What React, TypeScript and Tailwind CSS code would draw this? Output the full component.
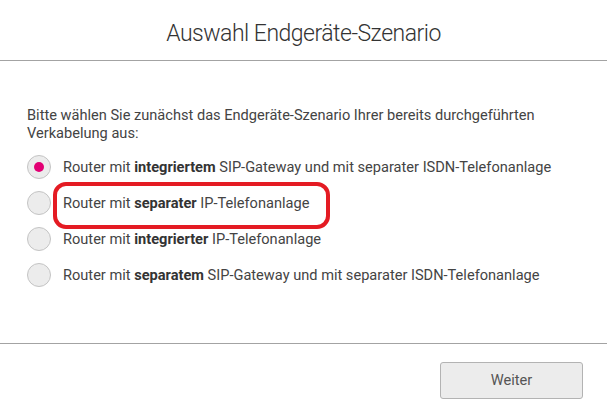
import { ReactNode } from 'react';

interface Option {
  id: string;
  pre: string;
  bold: string;
  post: string;
}

const options: Option[] = [
  { id: 'a', pre: 'Router mit ', bold: 'integriertem', post: ' SIP-Gateway und mit separater ISDN-Telefonanlage' },
  { id: 'b', pre: 'Router mit ', bold: 'separater', post: ' IP-Telefonanlage' },
  { id: 'c', pre: 'Router mit ', bold: 'integrierter', post: ' IP-Telefonanlage' },
  { id: 'd', pre: 'Router mit ', bold: 'separatem', post: ' SIP-Gateway und mit separater ISDN-Telefonanlage' },
];

function Radio({ checked }: { checked: boolean }) {
  return (
    <span className="w-[24px] h-[24px] rounded-full bg-[#ececec] border border-[#c4c4c4] flex items-center justify-center shrink-0">
      {checked && <span className="w-[10px] h-[10px] rounded-full bg-[#e20074]" />}
    </span>
  );
}

function Row({ checked, children }: { checked: boolean; children: ReactNode }) {
  return (
    <div className="flex items-center h-[36px] gap-[12px]">
      <Radio checked={checked} />
      <span>{children}</span>
    </div>
  );
}

export default function App() {
  return (
    <div
      className="relative w-[607px] h-[412px] bg-white text-[#444] overflow-hidden"
      style={{ fontFamily: 'Roboto, "Liberation Sans", sans-serif' }}
    >
      {/* Header */}
      <div className="h-[61px] flex items-center justify-center border-b border-[#a3a3a3]">
        <h1 className="text-[23px] font-light text-[#333] tracking-[-0.5px] mt-[9px]">Auswahl Endgeräte-Szenario</h1>
      </div>

      {/* Body */}
      <div className="h-[282px] px-[27px] pt-[45px] text-[14.6px] leading-[18px]">
        <p>
          Bitte wählen Sie zunächst das Endgeräte-Szenario Ihrer bereits durchgeführten
          <br />
          Verkabelung aus:
        </p>
        <div className="mt-[7px] flex flex-col">
          {options.map((o, i) => (
            <Row key={o.id} checked={i === 0}>
              {o.pre}
              <b className="font-bold text-[#333]">{o.bold}</b>
              {o.post}
            </Row>
          ))}
        </div>
      </div>

      {/* Footer */}
      <div className="border-t border-[#a3a3a3] flex justify-end pt-[18px] pr-[24px]">
        <button className="w-[143px] h-[37px] rounded-[3px] bg-[#ececec] border border-[#b3b3b3] text-[14.6px] text-[#555]">
          Weiter
        </button>
      </div>

      {/* Annotation */}
      <div className="absolute left-[53px] top-[182px] w-[277px] h-[47px] border-[4px] border-[#e41b23] rounded-[13px]" />
    </div>
  );
}
